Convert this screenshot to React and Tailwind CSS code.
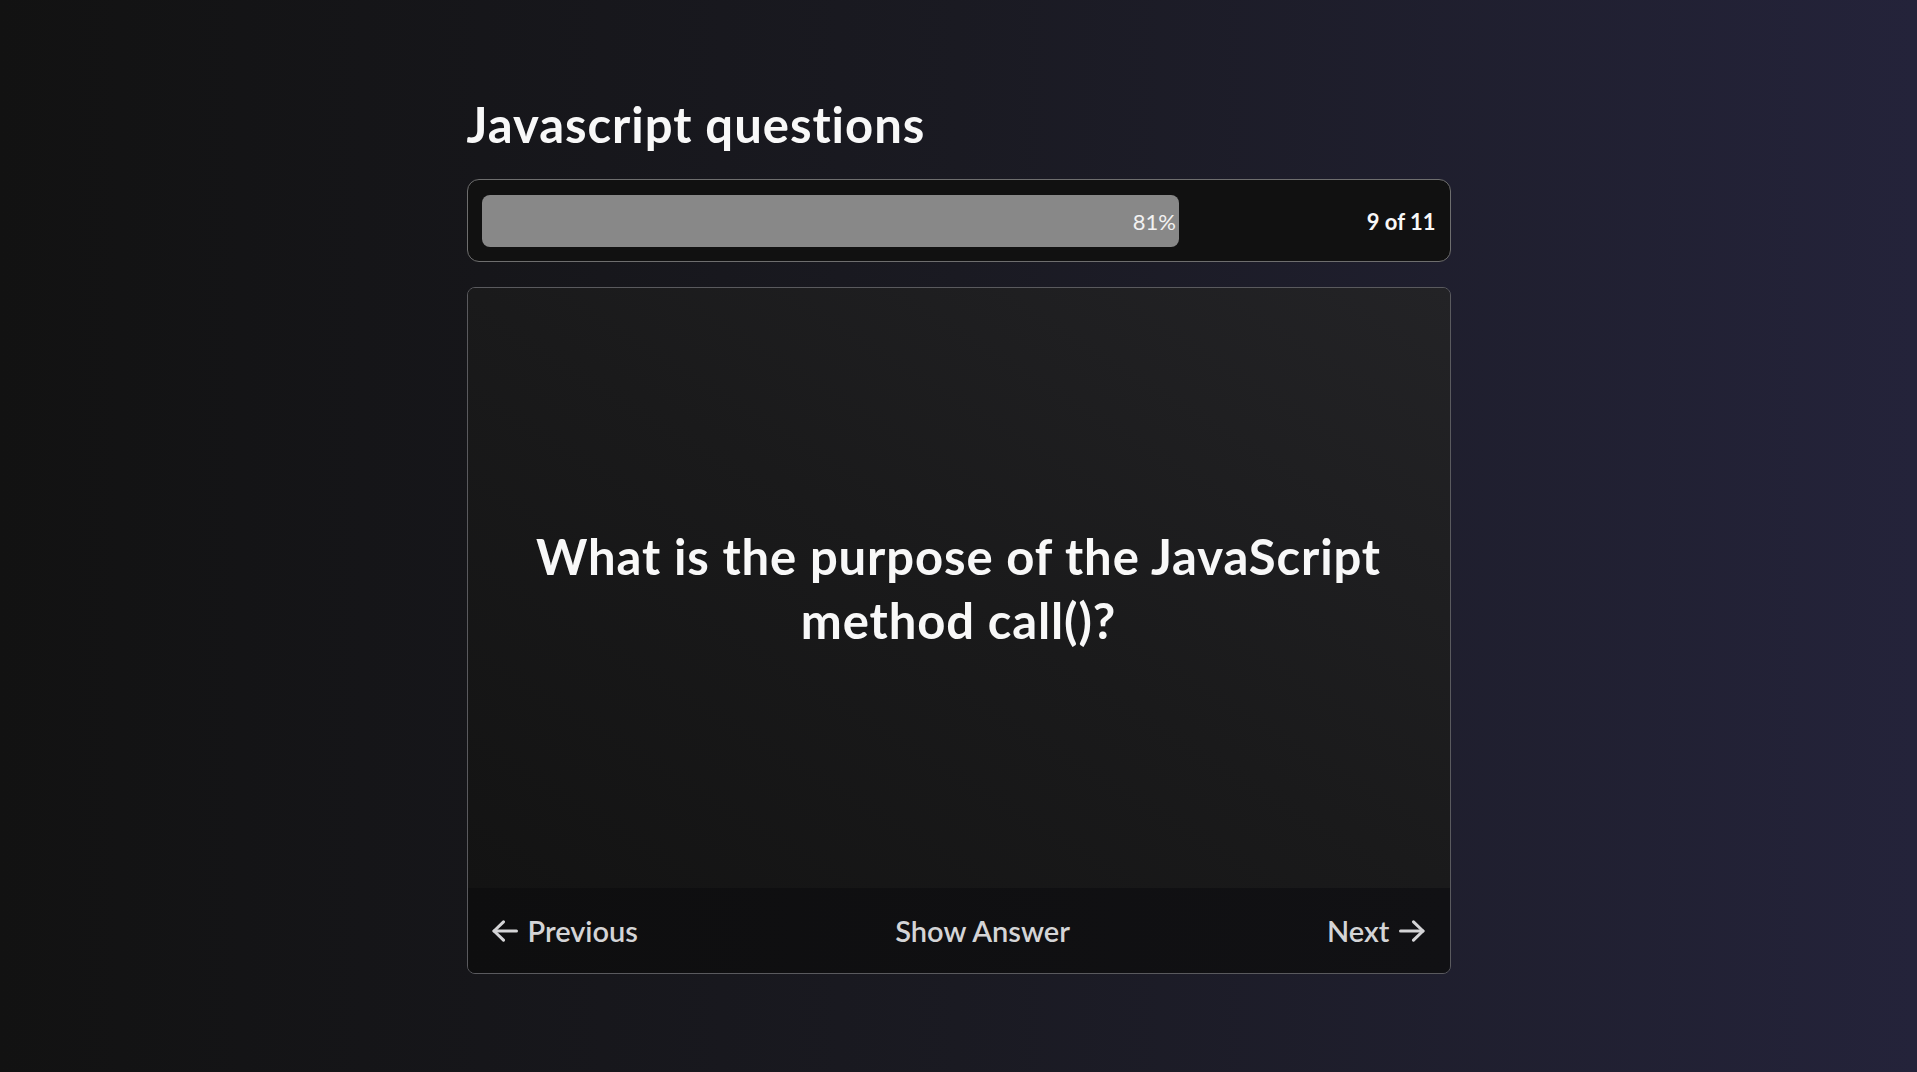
import React from "react";

const ArrowLeft = () => (
  <svg width="26" height="22" viewBox="0 0 26 22" fill="none" stroke="currentColor" strokeWidth="3" strokeLinecap="round" strokeLinejoin="round">
    <path d="M24.5 11H2" />
    <path d="M11.5 1.8 2 11l9.5 9.2" />
  </svg>
);

const ArrowRight = () => (
  <svg width="26" height="22" viewBox="0 0 26 22" fill="none" stroke="currentColor" strokeWidth="3" strokeLinecap="round" strokeLinejoin="round">
    <path d="M1.5 11H24" />
    <path d="M14.5 1.8 24 11l-9.5 9.2" />
  </svg>
);

const App = () => {
  const current = 9;
  const total = 11;
  const percent = Math.floor((current / total) * 100);

  return (
    <div
      className="min-h-screen w-full bg-gradient-to-r from-[#121212] via-[#1a1a22] to-[#24233a] text-white"
      style={{ fontFamily: "Lato, 'Open Sans', sans-serif" }}
    >
      <div className="mx-auto w-[984px] pt-[92px] pb-24">
        <h1 className="text-[49px] leading-[64px] tracking-[0.02em] font-bold text-[#f8f8f8] mb-[23px]">
          Javascript questions
        </h1>

        <div className="flex items-center gap-6 rounded-xl border border-[#6e6e6e] bg-[#111111] px-[14px] pt-[15px] pb-[14px]">
          <div className="flex-1 h-[52px]">
            <div
              className="h-full rounded-lg bg-[#888888] flex items-center justify-end pr-[3px]"
              style={{ width: `${percent}%` }}
            >
              <span className="text-[22px] text-[#f2f2f2]">{percent}%</span>
            </div>
          </div>
          <span className="w-[69px] text-right whitespace-nowrap text-[22px] font-bold text-[#f8f8f8]">
            {current} of {total}
          </span>
        </div>

        <div className="mt-[25px] overflow-hidden rounded-lg border border-[#5a5a5e]">
          <div className="h-[600px] flex items-center justify-center px-12 bg-gradient-to-tr from-[#131313] via-[#1a1a1b] to-[#232326]">
            <h2 className="text-center text-[49px] leading-[64px] tracking-[0.018em] font-bold text-[#f8f8f8]">
              What is the purpose of the JavaScript method call()?
            </h2>
          </div>
          <div className="h-[85px] flex items-center justify-between px-6 bg-gradient-to-r from-[#0e0e0f] to-[#111114] text-[#d4d4d6] text-[29px] font-semibold">
            <button className="flex items-center gap-[10px]">
              <ArrowLeft />
              Previous
            </button>
            <button>Show Answer</button>
            <button className="flex items-center gap-[10px]">
              Next
              <ArrowRight />
            </button>
          </div>
        </div>
      </div>
    </div>
  );
};

export default App;
